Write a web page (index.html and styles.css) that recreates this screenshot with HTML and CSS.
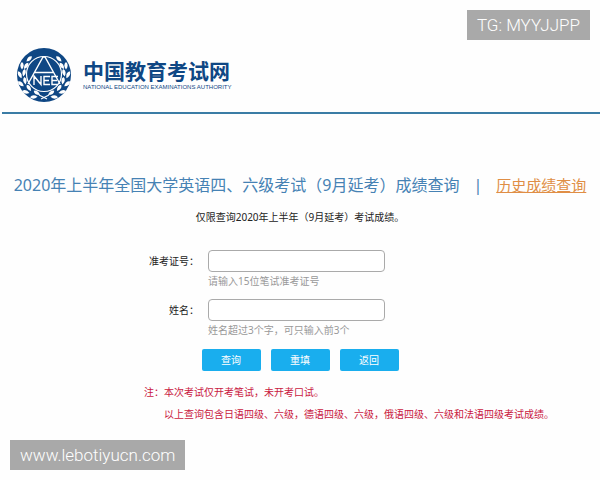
FILE: index.html
```html
<!doctype html>
<html lang="zh-CN">
  <head>
    <meta charset="utf-8">
    <title>中国教育考试网</title>
    <link rel="stylesheet" href="styles.css">
  </head>
  <body>
    <header class="header">
      <svg class="logo" viewBox="0 0 54 54" aria-hidden="true">
        <defs>
          <path id="leaf" d="M0 -4 Q3.4 -1 0 3.6 Q-3.4 -1 0 -4Z"/>
          <g id="branch">
            <use href="#leaf" transform="translate(20 45) rotate(-55)"/>
            <use href="#leaf" transform="translate(17 49) rotate(-95)"/>
            <use href="#leaf" transform="translate(12 40) rotate(-35)"/>
            <use href="#leaf" transform="translate(9 44) rotate(-75)"/>
            <use href="#leaf" transform="translate(8 33) rotate(-10)"/>
            <use href="#leaf" transform="translate(4 36) rotate(-50)"/>
            <use href="#leaf" transform="translate(7 25) rotate(12)"/>
            <use href="#leaf" transform="translate(3 27) rotate(-25)"/>
            <use href="#leaf" transform="translate(9 18) rotate(35)"/>
            <use href="#leaf" transform="translate(5 18) rotate(0)"/>
            <use href="#leaf" transform="translate(12 11) rotate(45)"/>
            <path d="M22 47 L30 51" stroke="#fff" stroke-width="1.2"/>
          </g>
        </defs>
        <circle cx="27" cy="27" r="27" fill="#0f4784"/>
        <g fill="#fff">
          <use href="#branch"/>
          <use href="#branch" transform="translate(54 0) scale(-1 1)"/>
        </g>
        <circle cx="27" cy="26" r="17.5" fill="#0f4784" stroke="#fff" stroke-width="1.2"/>
        <g fill="none" stroke="#fff" stroke-width="1.4">
          <path d="M11 36 L26 9 H28 L43 36 M18 24.5 H36"/>
          <path d="M17 37 V28 L24 36.5 V28 M33 28.5 H27 V36.5 H33 M27 32.5 H32 M41 28.5 H35 V36.5 H41 M35 32.5 H40"/>
        </g>
      </svg>
      <div class="brand">
        <div class="brand-name">中国教育考试网</div>
        <div class="brand-sub">NATIONAL EDUCATION EXAMINATIONS AUTHORITY</div>
      </div>
    </header>

    <main>
      <div class="title-row">
        <h1>2020年上半年全国大学英语四、六级考试（9月延考）成绩查询</h1>
        <span>|</span>
        <a href="#">历史成绩查询</a>
      </div>
      <p class="tip">仅限查询2020年上半年（9月延考）考试成绩。</p>

      <form>
        <div class="field">
          <label for="ticket">准考证号：</label>
          <input id="ticket" type="text">
          <span class="hint">请输入15位笔试准考证号</span>
        </div>
        <div class="field">
          <label for="name">姓名：</label>
          <input id="name" type="text">
          <span class="hint">姓名超过3个字，可只输入前3个</span>
        </div>
        <div class="buttons">
          <button type="submit">查询</button>
          <button type="reset">重填</button>
          <button type="button">返回</button>
        </div>
      </form>

      <div class="notes">
        <span>注：</span>
        <div>
          <p>本次考试仅开考笔试，未开考口试。</p>
          <p>以上查询包含日语四级、六级，德语四级、六级，俄语四级、六级和法语四级考试成绩。</p>
        </div>
      </div>
    </main>

    <div class="mark mark-top">TG: MYYJJPP</div>
    <div class="mark mark-bottom">www.lebotiyucn.com</div>
  </body>
</html>
```
FILE: styles.css
```css
body {
  margin: 0;
  background: #fefefe;
  color: #222;
  font-family: "Noto Sans", "Noto Sans CJK SC", sans-serif;
  font-size: 10px;
  line-height: 22px;
}

h1, p {
  margin: 0;
}

.header {
  display: flex;
  align-items: center;
  gap: 12px;
  margin-left: 2px;
  padding: 48px 15px 10px;
  border-bottom: 2px solid #3a7ca5;
}

.logo {
  width: 54px;
  height: 54px;
}

.brand {
  color: #0f4784;
  white-space: nowrap;
}

.brand-name {
  font-size: 21px;
  font-weight: bold;
  line-height: 24px;
}

.brand-sub {
  font-family: "Liberation Sans", sans-serif;
  font-size: 6px;
  line-height: 8px;
}

.title-row {
  display: flex;
  justify-content: center;
  align-items: center;
  gap: 14px;
  margin-top: 59px;
  color: #4682b4;
  font-size: 16px;
  line-height: 24px;
  white-space: nowrap;
}

h1 {
  font-size: 16px;
  font-weight: normal;
}

.title-row a {
  color: #e08e45;
  font-size: 15px;
}

.tip {
  margin-top: 9px;
  text-align: center;
}

form {
  width: 302px;
  margin: 22px auto 0;
}

.field {
  display: grid;
  grid-template-columns: 50px 177px;
  column-gap: 9px;
  margin-bottom: 9px;
}

.field label {
  text-align: right;
  white-space: nowrap;
}

.field input {
  box-sizing: border-box;
  width: 100%;
  height: 22px;
  padding: 0 6px;
  border: 1px solid #aaa;
  border-radius: 4px;
  background: #fff;
  font: inherit;
}

.hint {
  grid-column: 2;
  color: #999;
  line-height: 18px;
}

.buttons {
  display: flex;
  justify-content: center;
  gap: 10px;
  padding-top: 1px;
}

.buttons button {
  width: 59px;
  height: 22px;
  padding: 0;
  border: 0;
  border-radius: 2px;
  background: #19aeee;
  color: #fff;
  font: inherit;
}

.notes {
  display: flex;
  margin: 10px 0 0 24%;
  color: #c9183f;
  white-space: nowrap;
}

/* labels floating over the page corners */
.mark {
  position: absolute;
  padding: 0 10px;
  background: #a9a9a9;
  color: #fff;
  font-family: Roboto, "Liberation Sans", sans-serif;
  font-size: 17px;
  font-weight: 300;
  line-height: 30px;
}

.mark-top {
  top: 10px;
  right: 10px;
}

.mark-bottom {
  top: 440px;
  left: 10px;
}
```
